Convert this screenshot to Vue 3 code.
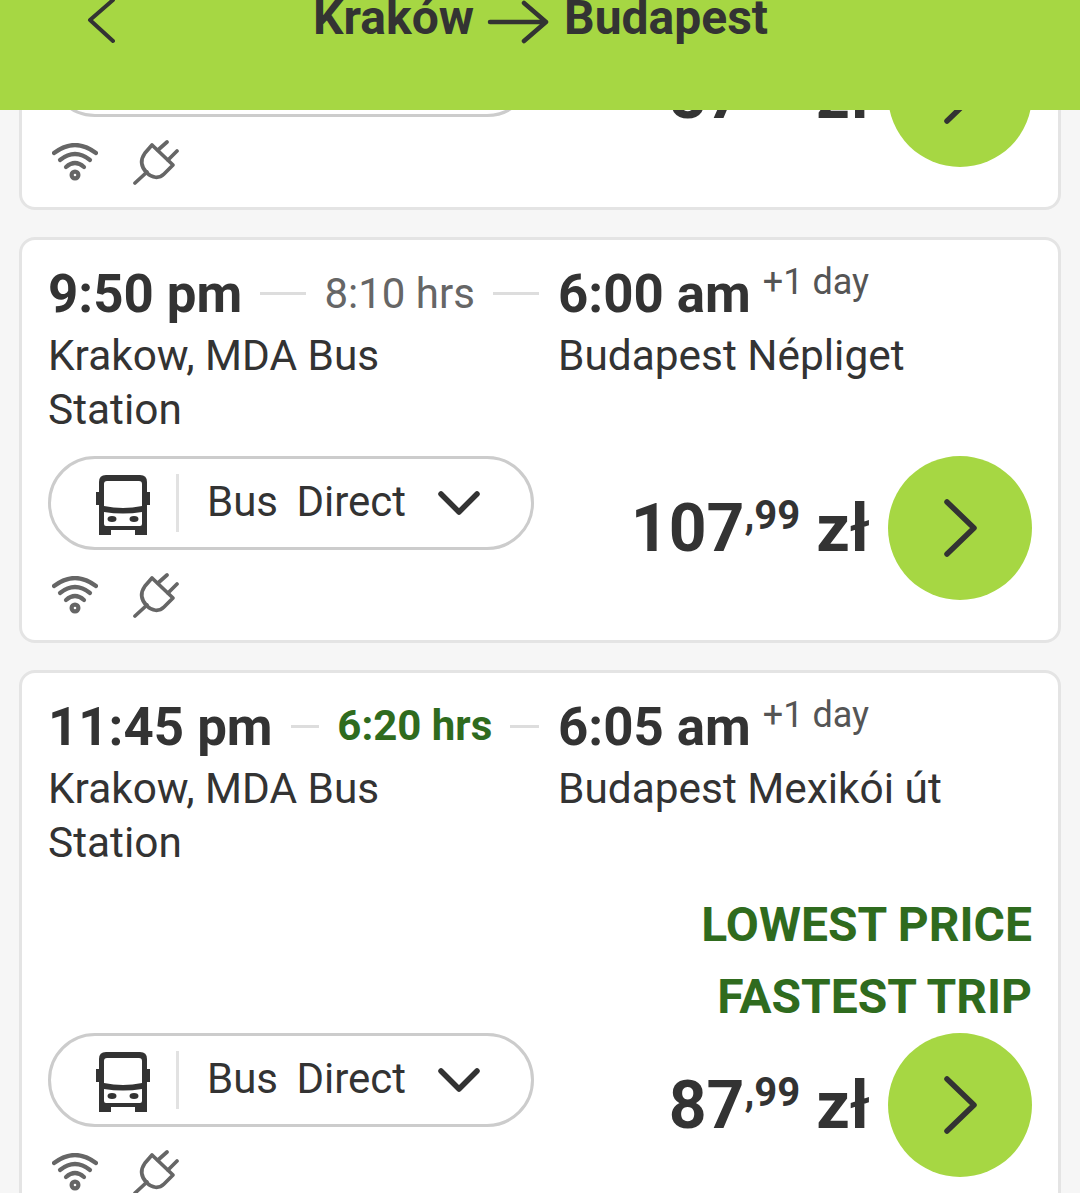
<script setup>
const viajes = [
  {
    salida: '9:50 pm',
    duracion: '8:10 hrs',
    llegada: '6:00 am',
    origen: 'Krakow, MDA Bus Station',
    destino: 'Budapest Népliget',
    entero: '87',
    etiquetas: [],
  },
  {
    salida: '9:50 pm',
    duracion: '8:10 hrs',
    llegada: '6:00 am',
    origen: 'Krakow, MDA Bus Station',
    destino: 'Budapest Népliget',
    entero: '107',
    etiquetas: [],
  },
  {
    salida: '11:45 pm',
    duracion: '6:20 hrs',
    rapido: true,
    llegada: '6:05 am',
    origen: 'Krakow, MDA Bus Station',
    destino: 'Budapest Mexikói út',
    entero: '87',
    etiquetas: ['LOWEST PRICE', 'FASTEST TRIP'],
  },
]
</script>

<template>
  <div class="page">
    <header class="header">
      <svg class="back" width="28" height="46" viewBox="0 0 28 46">
        <path d="M26 2 L3 22 L26 43" fill="none" stroke="#333" stroke-width="4" stroke-linecap="round" stroke-linejoin="round" />
      </svg>
      <div class="title">
        <span>Kraków</span>
        <svg class="arrow" width="62" height="44" viewBox="0 0 62 44">
          <path d="M3 22 H59 M37 3 L59 22 L37 41" fill="none" stroke="#333" stroke-width="4.5" stroke-linecap="round" stroke-linejoin="round" />
        </svg>
        <span>Budapest</span>
      </div>
    </header>

    <main class="list">
      <article v-for="(v, i) in viajes" :key="i" class="card">
        <div class="times">
          <div class="col-left">
            <div class="time-row">
              <span class="hour">{{ v.salida }}</span>
              <span class="line"></span>
              <span class="duration" :class="{ fast: v.rapido }">{{ v.duracion }}</span>
              <span class="line"></span>
            </div>
            <div class="station station-left">{{ v.origen }}</div>
          </div>
          <div class="col-right">
            <div class="time-row">
              <span class="hour">{{ v.llegada }}</span>
              <span class="plus">+1 day</span>
            </div>
            <div class="station">{{ v.destino }}</div>
          </div>
        </div>

        <div v-if="v.etiquetas.length" class="labels">
          <div v-for="e in v.etiquetas" :key="e" class="label">{{ e }}</div>
        </div>

        <div class="bottom" :class="{ close: v.etiquetas.length }">
          <div class="pill">
            <svg class="bus" width="54" height="60" viewBox="0 0 54 60">
              <path
                fill="#333"
                fill-rule="evenodd"
                d="M10 0 H44 Q51 0 51 7 V17 H54 V30 H51 V60 H39 V55 H15 V60 H3 V30 H0 V17 H3 V7 Q3 0 10 0 Z
                   M11 6 Q8 6 8 9 V31 Q27 35 46 31 V9 Q46 6 43 6 Z
                   M8 37 V49 Q8 51 10 51 H44 Q46 51 46 49 V37 Q27 40 8 37 Z"
              />
              <ellipse cx="16" cy="44" rx="4.5" ry="3" fill="#333" />
              <ellipse cx="38" cy="44" rx="4.5" ry="3" fill="#333" />
            </svg>
            <span class="divider"></span>
            <span class="pill-text">Bus Direct</span>
            <svg class="down" width="42" height="24" viewBox="0 0 42 24">
              <path d="M3 3 L21 21 L39 3" fill="none" stroke="#333" stroke-width="5.5" stroke-linecap="round" stroke-linejoin="round" />
            </svg>
          </div>
          <div class="price">
            <span class="amount">{{ v.entero }}</span><span class="cents">,99</span><span class="currency">zł</span>
          </div>
          <button class="go">
            <svg width="38" height="62" viewBox="0 0 38 62">
              <path d="M6 5 L33 31 L6 57" fill="none" stroke="#333" stroke-width="5.5" stroke-linecap="round" stroke-linejoin="round" />
            </svg>
          </button>
        </div>

        <div class="amenities">
          <svg width="46" height="38" viewBox="0 0 46 38">
            <g fill="none" stroke="#666" stroke-width="4.2" stroke-linecap="round">
              <path d="M2 10 Q23 -6 44 10" />
              <path d="M8 17 Q23 5 38 17" />
              <path d="M14 24 Q23 16 32 24" />
              <circle cx="23" cy="32" r="3.4" />
            </g>
          </svg>
          <svg width="46" height="46" viewBox="0 0 46 46">
            <g fill="none" stroke="#666" stroke-width="3.7" stroke-linecap="round" stroke-linejoin="round">
              <path d="M19 6 L40 26 L31 35 C26 40 19 39 14 34 C8 28 7 21 12 14 Z" />
              <path d="M25 11 L34 3 M35 21 L44 12 M14 33 L2 44" />
            </g>
          </svg>
        </div>
      </article>
    </main>
  </div>
</template>

<style scoped>
.page {
  position: relative;
  width: 1080px;
  height: 1193px;
  overflow: hidden;
  background: #f6f6f6;
  color: #333;
  font-family: Roboto, "Liberation Sans", sans-serif;
}

.header {
  position: absolute;
  top: 0;
  left: 0;
  right: 0;
  height: 110px;
  z-index: 2;
  background: #a6d743;
}

.back {
  position: absolute;
  left: 87px;
  top: -2px;
}

.title {
  position: absolute;
  left: 313px;
  top: -12px;
  display: flex;
  align-items: center;
  gap: 13px;
  font-size: 48px;
  font-weight: 700;
  line-height: 60px;
  white-space: nowrap;
}

.arrow {
  margin-top: 8px;
  margin-right: 2px;
}

.list {
  display: flex;
  flex-direction: column;
  gap: 27px;
  margin-top: -196px;
  padding: 0 19px;
}

.card {
  box-sizing: border-box;
  background: #fff;
  border: 3px solid #e4e4e4;
  border-radius: 16px;
  padding: 22px 26px 22px;
}

.times {
  display: flex;
  gap: 19px;
}

.col-left {
  width: 491px;
  flex: none;
}

.col-right {
  flex: 1;
}

.time-row {
  display: flex;
  align-items: center;
  height: 62px;
}

.hour {
  font-size: 52.8px;
  font-weight: 700;
  white-space: nowrap;
  margin-top: 2px;
}

.line {
  flex: 1;
  height: 3px;
  background: #ddd;
  margin-left: 18px;
}

.duration {
  margin-left: 18px;
  font-size: 42px;
  color: #666;
  white-space: nowrap;
}

.duration.fast {
  color: #2f6b1e;
  font-weight: 700;
  margin-bottom: 2px;
}

.plus {
  align-self: flex-start;
  margin-left: 12px;
  font-size: 36px;
  line-height: 40px;
  color: #555;
  white-space: nowrap;
}

.station {
  font-size: 42.4px;
  line-height: 54px;
  margin-top: 5px;
}

.station-left {
  width: 400px;
}

.labels {
  margin-top: 19px;
  text-align: right;
}

.label {
  font-size: 48px;
  font-weight: 700;
  line-height: 72px;
  color: #2f6b1e;
}

.bottom {
  display: flex;
  align-items: center;
  margin-top: 19px;
}

.bottom.close {
  margin-top: 0;
}

.pill {
  box-sizing: border-box;
  width: 486px;
  height: 94px;
  flex: none;
  display: flex;
  align-items: center;
  border: 3px solid #ccc;
  border-radius: 47px;
  padding-left: 45px;
  margin-top: -50px;
}

.bus {
  margin-top: 4px;
}

.divider {
  width: 3px;
  height: 58px;
  margin-left: 26px;
  background: #e2e2e2;
}

.pill-text {
  margin-left: 28px;
  margin-bottom: 4px;
  font-size: 42px;
  word-spacing: 8px;
  white-space: nowrap;
}

.down {
  margin-left: 32px;
}

.price {
  flex: 1;
  text-align: right;
  white-space: nowrap;
  font-weight: 700;
  padding-right: 18px;
}

.amount {
  font-size: 66px;
}

.cents {
  font-size: 40px;
  vertical-align: 22px;
  line-height: 0;
}

.currency {
  font-size: 66px;
  margin-left: 16px;
}

.go {
  width: 144px;
  height: 144px;
  flex: none;
  display: flex;
  align-items: center;
  justify-content: center;
  border: none;
  border-radius: 50%;
  padding: 0;
  background: #a6d743;
}

.amenities {
  display: flex;
  align-items: center;
  gap: 35px;
  margin-top: -28px;
  margin-left: 4px;
  height: 46px;
}
</style>

<style>
body {
  background: #f6f6f6;
}
</style>
